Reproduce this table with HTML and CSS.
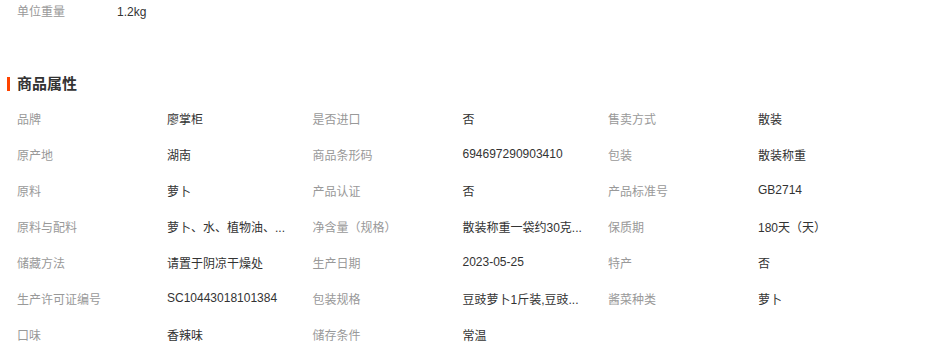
FILE: index.html
```html
<!DOCTYPE html>
<html lang="zh">
<head>
<meta charset="utf-8">
<link rel="stylesheet" href="styles.css">
</head>
<body>
<div class="page">
  <div class="unit-row">
    <span class="unit-label">单位重量</span>
    <span class="unit-value">1.2kg</span>
  </div>

  <h2 class="section-title">商品属性</h2>

  <div class="attrs">
    <div class="attr"><span class="k">品牌</span><span class="v">廖掌柜</span></div>
    <div class="attr"><span class="k">是否进口</span><span class="v">否</span></div>
    <div class="attr"><span class="k">售卖方式</span><span class="v">散装</span></div>

    <div class="attr"><span class="k">原产地</span><span class="v">湖南</span></div>
    <div class="attr"><span class="k">商品条形码</span><span class="v">694697290903410</span></div>
    <div class="attr"><span class="k">包装</span><span class="v">散装称重</span></div>

    <div class="attr"><span class="k">原料</span><span class="v">萝卜</span></div>
    <div class="attr"><span class="k">产品认证</span><span class="v">否</span></div>
    <div class="attr"><span class="k">产品标准号</span><span class="v">GB2714</span></div>

    <div class="attr"><span class="k">原料与配料</span><span class="v">萝卜、水、植物油、...</span></div>
    <div class="attr"><span class="k">净含量（规格）</span><span class="v">散装称重一袋约30克...</span></div>
    <div class="attr"><span class="k">保质期</span><span class="v">180天（天）</span></div>

    <div class="attr"><span class="k">储藏方法</span><span class="v">请置于阴凉干燥处</span></div>
    <div class="attr"><span class="k">生产日期</span><span class="v">2023-05-25</span></div>
    <div class="attr"><span class="k">特产</span><span class="v">否</span></div>

    <div class="attr"><span class="k">生产许可证编号</span><span class="v">SC10443018101384</span></div>
    <div class="attr"><span class="k">包装规格</span><span class="v">豆豉萝卜1斤装,豆豉...</span></div>
    <div class="attr"><span class="k">酱菜种类</span><span class="v">萝卜</span></div>

    <div class="attr"><span class="k">口味</span><span class="v">香辣味</span></div>
    <div class="attr"><span class="k">储存条件</span><span class="v">常温</span></div>
  </div>
</div>
</body>
</html>
```

FILE: styles.css
```css
html, body {
  margin: 0;
  padding: 0;
  background: #fff;
}

body {
  font-family: "Liberation Sans", "Noto Sans CJK SC", sans-serif;
  font-size: 12px;
  color: #333;
}

.page {
  padding-left: 17px;
}

.unit-row {
  display: flex;
  height: 24px;
  line-height: 24px;
}

.unit-label {
  width: 100px;
  color: #999;
}

.unit-value {
  color: #333;
}

.section-title {
  position: relative;
  margin: 50px 0 0 0;
  height: 20px;
  line-height: 20px;
  font-size: 15px;
  font-weight: bold;
  color: #333;
}

.section-title::before {
  content: "";
  position: absolute;
  left: -10px;
  top: 3px;
  width: 3px;
  height: 14px;
  background: #ff4400;
}

.attrs {
  margin-top: 6px;
  display: grid;
  grid-template-columns: repeat(3, 295.5px);
  grid-auto-rows: 36px;
}

.attr {
  display: flex;
  align-items: center;
  white-space: nowrap;
}

.k {
  width: 150px;
  flex: none;
  color: #999;
}

.v {
  color: #333;
}
```
